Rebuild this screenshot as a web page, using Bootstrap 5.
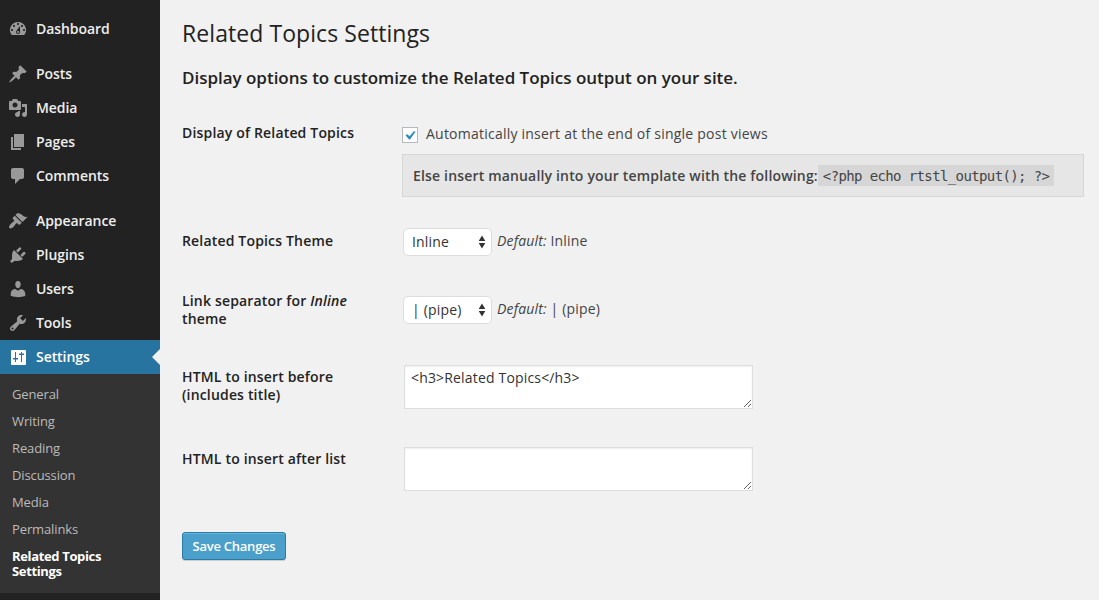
<!DOCTYPE html>
<html lang="en">
<head>
<meta charset="utf-8">
<meta name="viewport" content="width=device-width, initial-scale=1">
<title>Related Topics Settings</title>
<link rel="stylesheet" href="https://cdn.jsdelivr.net/npm/bootstrap@5.3.0/dist/css/bootstrap.min.css">
<style>
body{font-family:"Open Sans",sans-serif;font-size:14px;line-height:18px;color:#444;background:#f1f1f1;height:600px;overflow:hidden}
.side{width:160px;background:#222;padding-top:12px}
.side .menu-link{height:34px;padding:0 0 0 8px;gap:8px;color:#eee;font-weight:600;font-size:14px;letter-spacing:-.06px;text-decoration:none;position:relative}
.side svg{width:20px;height:20px;fill:#999;flex:none}
.gap-above{margin-top:11px}
.side .menu-link.current{background:#2874a1;color:#fff}
.side .current svg{fill:#fff}
.current::after{content:"";position:absolute;right:0;top:9px;border:8px solid transparent;border-left:0;border-right-color:#f1f1f1}
.submenu{background:#333;padding:7px 0 8px;height:219px}
.submenu a{display:block;padding:6px 12px;font-size:13px;line-height:15px;letter-spacing:-.12px;color:#bbb;text-decoration:none}
.submenu a.here{color:#fff;font-weight:700;letter-spacing:-.35px}
.main{padding:19px 15px 0 22px}
h1{font-size:23px;line-height:29px;font-weight:400;letter-spacing:.07px;color:#222;margin:0}
h2{font-size:17px;line-height:24px;font-weight:600;letter-spacing:-.02px;color:#222;margin:18px 0 0}
form{letter-spacing:.17px}
.opt-label{width:220px;flex:none;padding-right:40px;color:#222;font-weight:600}
.r1{margin-top:34px;height:108px}
.r2{height:60px}.r3{height:76px}.r4{height:82px}.r5{height:82px}
.auto-row{height:19px;padding-top:3px}
.auto-text{letter-spacing:.23px;margin-top:-1px;line-height:16px}
.tick{width:16px;height:16px;border:1px solid #b4b9be;background:#fff}
.tick svg{width:14px;height:14px;display:block}
.notice-box{height:43px;padding:0 10px;margin-top:11px;background:#e6e6e6;border:1px solid #d6d6d6;font-weight:600}
.notice-box code{font:14px/19px "DejaVu Sans Mono",monospace;letter-spacing:-.62px;color:#444;background:#d6d6d6;padding:2px 5px 0}
.pick{width:89px;height:28px;margin:-4px 5px 0 1px;padding:0 5px 0 8px;background:#fff;border:1px solid #ddd;border-radius:5px;color:#333}
.pick svg{width:8px;height:14px;fill:#333}
textarea.form-control{width:349px;height:44px;min-height:0;margin:-3px 0 0 2px;padding:2px 6px;font-size:14px;line-height:19px;letter-spacing:.17px;color:#333;border:1px solid #ddd;border-radius:0;box-shadow:inset 0 1px 2px rgba(0,0,0,.07);overflow:hidden;resize:both}
.btn-save{width:104px;height:28px;padding:0;font-size:13px;font-weight:600;line-height:26px;letter-spacing:-.25px;color:#fff;background:#4aa0cb;border:1px solid #2a7aa6;border-radius:3px;box-shadow:inset 0 1px 0 rgba(120,200,230,.6),0 1px 0 rgba(0,0,0,.15)}
</style>
</head>
<body class="d-flex">
<nav class="side flex-shrink-0">
  <a href="#" class="menu-link d-flex align-items-center"><svg viewBox="0 0 20 20"><path fill-rule="evenodd" d="M3.76 16h12.48A7.998 7.998 0 0 0 10 3a7.998 7.998 0 0 0-6.24 13zM10 4c.55 0 1 .45 1 1s-.45 1-1 1-1-.45-1-1 .45-1 1-1zM6 6c.55 0 1 .45 1 1s-.45 1-1 1-1-.45-1-1 .45-1 1-1zm8 0c.55 0 1 .45 1 1s-.45 1-1 1-1-.45-1-1 .45-1 1-1zm-5.37 5.55L12 7v6c0 1.1-.9 2-2 2s-2-.9-2-2c0-.57.24-1.08.63-1.45zM4 10c.55 0 1 .45 1 1s-.45 1-1 1-1-.45-1-1 .45-1 1-1zm12 0c.55 0 1 .45 1 1s-.45 1-1 1-1-.45-1-1 .45-1 1-1zm-5 3c0-.55-.45-1-1-1s-1 .45-1 1 .45 1 1 1 1-.45 1-1z"/></svg><span>Dashboard</span></a>
  <a href="#" class="menu-link gap-above d-flex align-items-center"><svg viewBox="0 0 20 20"><path d="M10.44 3.02l1.82-1.82 6.36 6.35-1.83 1.82c-1.05-.68-2.48-.57-3.41.36l-.75.75c-.92.93-1.04 2.35-.35 3.41l-1.83 1.82-2.41-2.41-2.8 2.79c-.42.42-3.38 2.71-3.8 2.29s1.86-3.39 2.28-3.81l2.79-2.79L4.1 9.36l1.83-1.82c1.05.69 2.48.57 3.4-.36l.75-.75c.93-.92 1.05-2.35.36-3.41z"/></svg><span>Posts</span></a>
  <a href="#" class="menu-link d-flex align-items-center"><svg viewBox="0 0 20 20"><path fill-rule="evenodd" d="M13 11V4c0-.55-.45-1-1-1h-1.67L9 1H5L3.67 3H2c-.55 0-1 .45-1 1v7c0 .55.45 1 1 1h10c.55 0 1-.45 1-1zM7 4.5c1.38 0 2.5 1.12 2.5 2.5S8.38 9.5 7 9.5 4.5 8.38 4.5 7 5.62 4.5 7 4.5zM14 6h5v10.5c0 1.38-1.12 2.5-2.5 2.5S14 17.88 14 16.5s1.12-2.5 2.5-2.5c.17 0 .34.02.5.05V9h-3V6zm-4 8.05V13h2v3.5c0 1.38-1.12 2.5-2.5 2.5S7 17.88 7 16.5 8.12 14 9.5 14c.17 0 .34.02.5.05z"/></svg><span>Media</span></a>
  <a href="#" class="menu-link d-flex align-items-center"><svg viewBox="0 0 20 20"><path d="M6 15V2h10v13H6zm-1 1h8v2H3V5h2v11z"/></svg><span>Pages</span></a>
  <a href="#" class="menu-link d-flex align-items-center"><svg viewBox="0 0 20 20"><path d="M5 2h9c1.1 0 2 .9 2 2v7c0 1.1-.9 2-2 2h-2l-5 5v-5H5c-1.1 0-2-.9-2-2V4c0-1.1.9-2 2-2z"/></svg><span>Comments</span></a>
  <a href="#" class="menu-link gap-above d-flex align-items-center"><svg viewBox="0 0 20 20"><path d="M14.48 11.06L7.41 3.99l1.5-1.5c.5-.56 2.3-.47 3.51.32 1.21.8 1.43 1.28 2.91 2.1 1.18.64 2.45 1.26 4.45.85zm-.71.71L6.7 4.7 4.93 6.47c-.39.39-.39 1.02 0 1.41l1.06 1.06c.39.39.39 1.03 0 1.42-.6.6-1.43 1.11-2.21 1.69-.35.26-.7.53-1.01.84C1.43 14.23.4 16.08 1.4 17.07c.99 1 2.84-.03 4.18-1.36.31-.31.58-.66.85-1.02.57-.78 1.08-1.61 1.69-2.21.39-.39 1.02-.39 1.41 0l1.06 1.06c.39.39 1.02.39 1.41 0z"/></svg><span>Appearance</span></a>
  <a href="#" class="menu-link d-flex align-items-center"><svg viewBox="0 0 20 20"><path d="M13.11 4.36L9.87 7.6 8 5.73l3.24-3.24c.35-.34 1.05-.2 1.56.32.52.51.66 1.21.31 1.55zm-8 1.77l.91-1.12 9.01 9.01-1.19.84c-.71.71-2.63 1.16-3.82 1.16H6.14L4.9 17.26c-.59.59-1.54.59-2.12 0-.59-.58-.59-1.53 0-2.12l1.24-1.24v-3.88c0-1.13.4-3.19 1.09-3.89zm7.26 3.97l3.24-3.24c.34-.35 1.04-.21 1.55.31.52.51.66 1.21.31 1.55l-3.24 3.25z"/></svg><span>Plugins</span></a>
  <a href="#" class="menu-link d-flex align-items-center"><svg viewBox="0 0 20 20"><path d="M10 9.25c-2.27 0-2.73-3.44-2.73-3.44C7 4.02 7.82 2 9.97 2c2.16 0 2.98 2.02 2.71 3.81 0 0-.41 3.44-2.68 3.44zm0 2.57L12.72 10c2.39 0 4.52 2.33 4.52 4.53v2.49s-3.65 1.13-7.24 1.13c-3.65 0-7.24-1.13-7.24-1.13v-2.49c0-2.25 1.94-4.48 4.47-4.48z"/></svg><span>Users</span></a>
  <a href="#" class="menu-link d-flex align-items-center"><svg viewBox="0 0 20 20"><path fill-rule="evenodd" d="M16.68 9.77c-1.34 1.34-3.3 1.67-4.95.99l-5.41 6.52c-.99.99-2.59.99-3.58 0s-.99-2.59 0-3.57l6.52-5.42c-.68-1.65-.35-3.61.99-4.95 1.28-1.28 3.12-1.62 4.72-1.06l-2.89 2.89 2.82 2.82 2.86-2.87c.53 1.58.18 3.39-1.08 4.65zM3.81 16.21c.4.39 1.04.39 1.43 0 .4-.4.4-1.04 0-1.43-.39-.4-1.03-.4-1.43 0-.39.39-.39 1.03 0 1.43z"/></svg><span>Tools</span></a>
  <a href="#" class="menu-link current d-flex align-items-center"><svg viewBox="0 0 20 20"><path fill-rule="evenodd" d="M4 3h13q1 0 1 1v13q0 1-1 1H4q-1 0-1-1V4q0-1 1-1zM7 5v6H5v1.500h2V15h1v-2.500h2V11H8V5zM13 5v1.500h-2V8h2v7h1V8h2V6.500h-2V5z"/></svg><span>Settings</span></a>
  <div class="submenu">
    <a href="#">General</a><a href="#">Writing</a><a href="#">Reading</a><a href="#">Discussion</a><a href="#">Media</a><a href="#">Permalinks</a><a href="#" class="here">Related Topics Settings</a>
  </div>
</nav>
<main class="main flex-grow-1">
  <h1>Related Topics Settings</h1>
  <h2>Display options to customize the Related Topics output on your site.</h2>
  <form>
    <div class="d-flex r1">
      <div class="opt-label pe-0">Display of Related Topics</div>
      <div class="flex-grow-1">
        <div class="d-flex align-items-start gap-2 auto-row"><span class="tick"><svg viewBox="0 0 14 14"><path d="M2.500 7.200l2-1 2 2L11 3l1.500.8L7 11.500H6z" fill="#2f8bc4"/></svg></span><span class="auto-text">Automatically insert at the end of single post views</span></div>
        <div class="notice-box d-flex align-items-center"><span>Else insert manually into your template with the following:</span><code>&lt;?php echo rtstl_output(); ?&gt;</code></div>
      </div>
    </div>
    <div class="d-flex r2">
      <div class="opt-label">Related Topics Theme</div>
      <div class="pick d-flex align-items-center justify-content-between"><span>Inline</span><svg viewBox="0 0 8 14"><path d="M4 .5l3.300 5.500H.7zM4 13.500L.7 8h6.600z"/></svg></div>
      <div><em>Default:</em> Inline</div>
    </div>
    <div class="d-flex r3">
      <div class="opt-label">Link separator for <em>Inline</em> theme</div>
      <div class="d-flex align-items-start pt-2">
        <div class="pick d-flex align-items-center justify-content-between"><span>| (pipe)</span><svg viewBox="0 0 8 14"><path d="M4 .5l3.300 5.500H.7zM4 13.500L.7 8h6.600z"/></svg></div>
        <div><em>Default:</em> | (pipe)</div>
      </div>
    </div>
    <div class="d-flex r4">
      <label class="opt-label" for="before">HTML to insert before (includes title)</label>
      <textarea class="form-control" id="before">&lt;h3&gt;Related Topics&lt;/h3&gt;</textarea>
    </div>
    <div class="d-flex r5">
      <label class="opt-label" for="after">HTML to insert after list</label>
      <textarea class="form-control" id="after"></textarea>
    </div>
    <button type="button" class="btn btn-save">Save Changes</button>
  </form>
</main>
<script src="https://cdn.jsdelivr.net/npm/bootstrap@5.3.0/dist/js/bootstrap.bundle.min.js"></script>
</body>
</html>
